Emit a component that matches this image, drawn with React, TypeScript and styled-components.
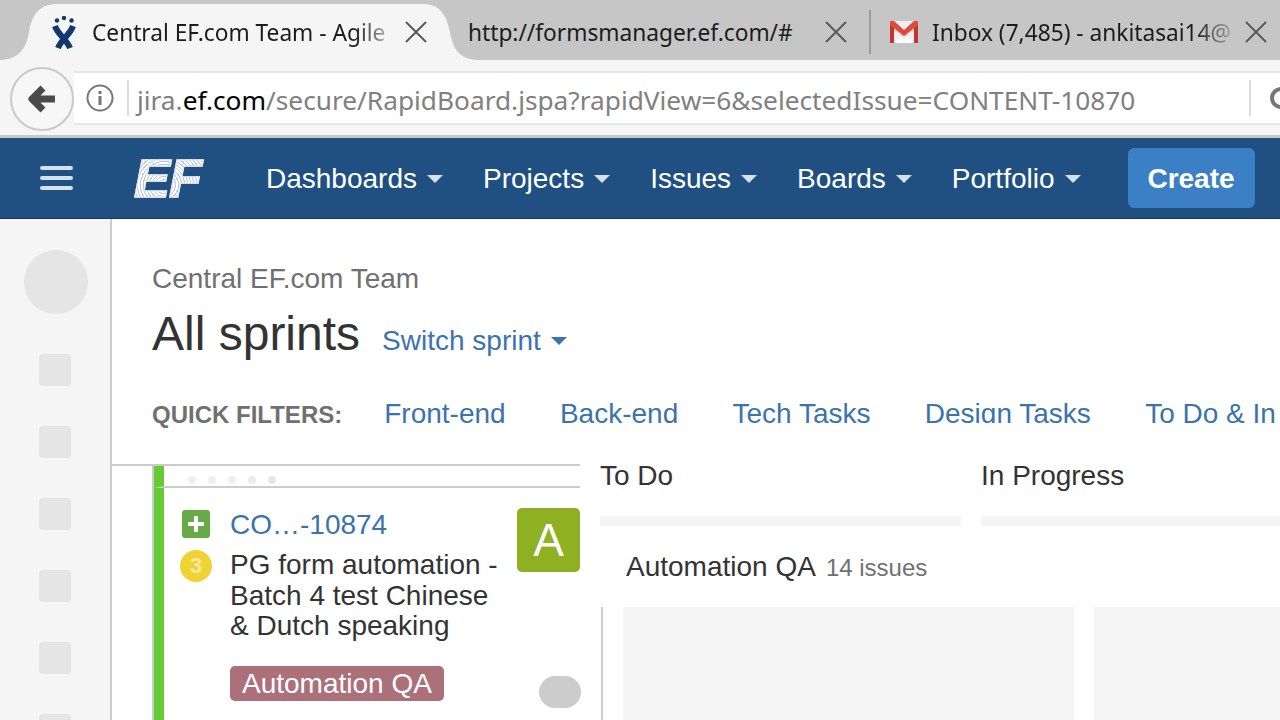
import styled, { createGlobalStyle } from "styled-components";

const GlobalStyle = createGlobalStyle`
  html, body {
    margin: 0;
    padding: 0;
    background: #fff;
  }
  #root {
    width: 1280px;
    height: 720px;
    overflow: hidden;
  }
`;

const Page = styled.div`
  width: 1280px;
  height: 720px;
  overflow: hidden;
  display: flex;
  flex-direction: column;
  font-family: "Liberation Sans", Arial, sans-serif;
  color: #333;
`;

const TabStrip = styled.div`
  height: 60px;
  flex: none;
  background: #c6c6c6;
  display: flex;
  align-items: stretch;
  font-family: "Noto Sans", sans-serif;
`;

const Tab = styled.div<{ $active?: boolean; $width: number; $pad: number }>`
  box-sizing: border-box;
  flex: none;
  width: ${(props) => props.$width}px;
  padding-left: ${(props) => props.$pad}px;
  padding-top: 4px;
  display: flex;
  align-items: center;
  gap: 14px;
  background: ${(props) => (props.$active ? "#f5f5f5" : "transparent")};
  clip-path: ${(props) =>
    props.$active
      ? `path("M0 60 C20 59 26 48 29 32 C32 14 40 4 58 4 L422 4 C440 4 446 14 450 32 C453 48 458 59 478 60 Z")`
      : "none"};
  margin-right: ${(props) => (props.$active ? "-20px" : "0")};
`;

const TabTitle = styled.div<{ $width: number; $fade?: boolean }>`
  flex: none;
  width: ${(props) => props.$width}px;
  padding-top: 2px;
  font-size: 22.7px;
  line-height: 32px;
  color: #1c1c1c;
  white-space: nowrap;
  overflow: hidden;
  mask-image: ${(props) =>
    props.$fade ? "linear-gradient(to right, #000 88%, rgba(0,0,0,0.25))" : "none"};
`;

const TabDivider = styled.div`
  flex: none;
  width: 2px;
  margin: 10px 0 6px;
  background: #9c9c9c;
`;

const CloseIcon = styled.svg`
  flex: none;
  width: 24px;
  height: 24px;
  stroke: #5a5a5a;
  stroke-width: 2;
  fill: none;
`;

const Toolbar = styled.div`
  height: 75px;
  flex: none;
  box-sizing: border-box;
  background: #f5f5f5;
  display: flex;
  align-items: center;
  padding-left: 10px;
`;

const BackButton = styled.div`
  flex: none;
  box-sizing: border-box;
  width: 64px;
  height: 64px;
  margin-top: 2px;
  border: 2px solid #c9c9c9;
  border-radius: 50%;
  background: #f7f7f7;
  display: flex;
  align-items: center;
  justify-content: center;
`;

const Omnibox = styled.div`
  flex: 1;
  min-width: 0;
  box-sizing: border-box;
  height: 54px;
  background: #fff;
  border-top: 2px solid #e6e6e6;
  border-bottom: 2px solid #e6e6e6;
  display: flex;
  align-items: center;
  padding-left: 12px;
  overflow: hidden;
`;

const OmniDivider = styled.div`
  flex: none;
  width: 2px;
  height: 36px;
  background: #dcdcdc;
`;

const UrlText = styled.div`
  flex: none;
  width: 1120px;
  box-sizing: border-box;
  padding: 4px 0 0 8px;
  font-family: "Noto Sans", sans-serif;
  font-size: 26.25px;
  line-height: 36px;
  color: #808080;
  white-space: nowrap;
  b {
    font-weight: 400;
    color: #000;
  }
`;

const NavBar = styled.nav`
  height: 84px;
  flex: none;
  box-sizing: border-box;
  background: #205081;
  border-top: 3px solid #c8c8c8;
  border-bottom: 1px solid #1d3557;
  display: flex;
  align-items: center;
  padding-left: 40px;
`;

const Burger = styled.div`
  flex: none;
  width: 33px;
  display: flex;
  flex-direction: column;
  gap: 6px;
  margin-right: 61px;
  span {
    display: block;
    height: 4px;
    border-radius: 2px;
    background: #d6e0ea;
  }
`;

const EfLogo = styled.div`
  flex: none;
  width: 72px;
  margin-right: 60px;
  font-weight: 700;
  font-style: italic;
  font-size: 54px;
  line-height: 54px;
  letter-spacing: -1px;
  color: transparent;
  background: repeating-radial-gradient(circle at 30px 34px, #ffffff 0 2px, #b9c7d8 2px 3px);
  -webkit-background-clip: text;
  background-clip: text;
  -webkit-text-stroke: 1.5px rgba(226, 232, 240, 0.85);
  filter: blur(0.4px);
`;

const NavItem = styled.div`
  flex: none;
  display: flex;
  align-items: center;
  gap: 10px;
  margin-right: 40px;
  padding-top: 2px;
  font-size: 28px;
  line-height: 40px;
  color: #fff;
  white-space: nowrap;
`;

const Caret = styled.span<{ $color?: string }>`
  flex: none;
  width: 0;
  height: 0;
  border-left: 8px solid transparent;
  border-right: 8px solid transparent;
  border-top: 8px solid ${(props) => props.$color || "#d6e0ea"};
`;

const CreateButton = styled.div`
  flex: none;
  box-sizing: border-box;
  width: 127px;
  height: 60px;
  margin-left: 7px;
  padding-top: 1px;
  border-radius: 6px;
  background: #3b7fc4;
  color: #fff;
  font-size: 28px;
  font-weight: 700;
  display: flex;
  align-items: center;
  justify-content: center;
`;

const Body = styled.div`
  flex: 1;
  min-height: 0;
  display: flex;
`;

const Sidebar = styled.aside`
  flex: none;
  width: 112px;
  box-sizing: border-box;
  background: #f5f5f5;
  border-right: 2px solid #ccc;
  display: flex;
  flex-direction: column;
  align-items: center;
  padding-top: 31px;
  gap: 40px;
  overflow: hidden;
`;

const SideAvatar = styled.div`
  flex: none;
  width: 64px;
  height: 64px;
  border-radius: 50%;
  background: #e5e5e5;
  margin-left: 2px;
`;

const SideSquare = styled.div`
  flex: none;
  width: 32px;
  height: 32px;
  border-radius: 4px;
  background: #e5e5e5;
`;

const Main = styled.main`
  flex: 1;
  min-width: 0;
  display: flex;
  flex-direction: column;
  overflow: hidden;
`;

const Header = styled.header`
  flex: none;
  height: 245px;
  box-sizing: border-box;
  padding: 40px 0 0 40px;
`;

const Crumb = styled.div`
  font-size: 28px;
  line-height: 40px;
  color: #707070;
`;

const TitleRow = styled.div`
  display: flex;
  align-items: baseline;
  gap: 22px;
  margin-top: 7px;
  height: 56px;
`;

const Title = styled.h1`
  margin: 0;
  font-size: 48px;
  line-height: 56px;
  font-weight: 400;
  color: #333;
`;

const SwitchSprint = styled.div`
  display: flex;
  align-items: center;
  gap: 10px;
  font-size: 28px;
  color: #3b73af;
`;

const Filters = styled.div`
  display: flex;
  align-items: flex-start;
  height: 29px;
  margin-top: 32px;
  white-space: nowrap;
`;

const FilterLabel = styled.div`
  flex: none;
  font-size: 24px;
  line-height: 42px;
  font-weight: 700;
  color: #707070;
  margin-right: 42px;
`;

const FilterLink = styled.div`
  flex: none;
  height: 29px;
  overflow: hidden;
  font-size: 28px;
  line-height: 40px;
  color: #3b73af;
  margin-right: 54.3px;
`;

const Board = styled.div`
  flex: 1;
  min-height: 0;
  display: flex;
`;

const DetailPanel = styled.section`
  flex: none;
  width: 468px;
  box-sizing: border-box;
  border-top: 2px solid #ccc;
  padding-left: 40px;
`;

const CardStrip = styled.div`
  height: 100%;
  border-left: 2px solid #ccc;
  display: flex;
  flex-direction: column;
`;

const Handle = styled.div`
  flex: none;
  height: 22px;
  box-sizing: border-box;
  border-left: 10px solid #65cc33;
  border-bottom: 2px solid #ccc;
  padding: 10px 0 0 24px;
  display: flex;
  gap: 12px;
`;

const HandleDot = styled.span<{ $shade: string }>`
  width: 8px;
  height: 8px;
  border-radius: 50%;
  background: ${(props) => props.$shade};
`;

const Card = styled.article`
  flex: 1;
  border-left: 10px solid #65cc33;
  padding: 20px 0 0 18px;
  display: grid;
  grid-template-columns: 48px 287px 63px;
  grid-template-rows: 30px auto;
  align-content: start;
`;

const TypeIcon = styled.div`
  width: 28px;
  height: 28px;
  margin-top: 2px;
  border-radius: 3px;
  background: #67ab49;
  display: flex;
  align-items: center;
  justify-content: center;
`;

const IssueKey = styled.div`
  font-size: 28px;
  line-height: 32px;
  padding-top: 1px;
  color: #3b73af;
`;

const Assignee = styled.div`
  grid-row: 1 / span 2;
  grid-column: 3;
  width: 63px;
  height: 64px;
  border-radius: 5px;
  background: #8eb021;
  color: #fff;
  font-size: 46px;
  display: flex;
  align-items: center;
  justify-content: center;
`;

const Priority = styled.div`
  width: 32px;
  height: 32px;
  margin: 12px 0 0 -2px;
  border-radius: 50%;
  background: #f0d332;
  color: #f8eaa0;
  font-size: 22px;
  font-weight: 700;
  display: flex;
  align-items: center;
  justify-content: center;
`;

const CardBody = styled.div`
  padding-top: 12px;
`;

const Summary = styled.div`
  font-size: 28px;
  line-height: 30.5px;
  color: #333;
  width: 280px;
`;

const LabelRow = styled.div`
  display: flex;
  align-items: flex-start;
  margin-top: 24px;
`;

const Label = styled.div`
  flex: none;
  box-sizing: border-box;
  height: 35px;
  padding: 0 12px;
  border-radius: 5px;
  background: #ac707a;
  color: #fff;
  font-size: 28px;
  line-height: 35px;
`;

const GreyPill = styled.div`
  grid-column: 3;
  grid-row: 2;
  align-self: start;
  margin: 138px 0 0 22px;
  width: 42px;
  height: 32px;
  border-radius: 16px;
  background: #ccc;
`;

const Columns = styled.section`
  flex: 1;
  min-width: 0;
  padding-left: 20px;
  display: flex;
  flex-direction: column;
`;

const ColumnHeads = styled.div`
  flex: none;
  display: flex;
  gap: 20px;
`;

const ColumnHead = styled.div<{ $width: number }>`
  flex: none;
  width: ${(props) => props.$width}px;
  height: 62px;
  box-sizing: border-box;
  border-bottom: 10px solid #f5f5f5;
  font-size: 28px;
  line-height: 24px;
  color: #333;
  white-space: nowrap;
`;

const SwimHead = styled.div`
  flex: none;
  display: flex;
  align-items: baseline;
  gap: 10px;
  height: 81px;
  box-sizing: border-box;
  padding: 24px 0 0 26px;
  font-size: 28px;
  line-height: 34px;
`;

const SwimCount = styled.span`
  font-size: 24px;
  color: #707070;
`;

const Swimlane = styled.div`
  flex: 1;
  min-height: 0;
  margin-left: 1px;
  border-left: 2px solid #ccc;
  padding-left: 20px;
  display: flex;
  gap: 20px;
`;

const SwimColumn = styled.div<{ $width: number }>`
  flex: none;
  width: ${(props) => props.$width}px;
  background: #f5f5f5;
`;

const Close = () => (
  <CloseIcon viewBox="0 0 24 24">
    <path d="M2 2 L22 22 M22 2 L2 22" />
  </CloseIcon>
);

const AtlassianMark = () => (
  <svg width="24" height="33" viewBox="0 0 24 33" style={{ flex: "none", marginLeft: 2, marginRight: 2 }}>
    <g fill="#0f3a6b">
      <circle cx="5" cy="4.5" r="2.2" />
      <circle cx="12" cy="2" r="2.2" />
      <circle cx="19.5" cy="4.5" r="2.2" />
    </g>
    <g fill="none" stroke="#0f3a6b" strokeWidth="6">
      <path d="M3 10 C6 19 14 22 18 32" />
      <path d="M21 10 C18 19 10 22 6 32" />
    </g>
  </svg>
);

const GmailMark = () => (
  <svg width="28" height="22" viewBox="0 0 28 22" style={{ flex: "none" }}>
    <rect x="1" y="0" width="26" height="22" rx="1" fill="#f0f0f0" />
    <path d="M4 22 L14 13 L24 22 Z" fill="#fafafa" />
    <path d="M4 6 L14 15 L24 6 V9 L14 17 L4 9 Z" fill="#d9d9d9" />
    <path d="M0 22 V2 C0 0.5 1 0 2 0 H4 V22 Z M24 22 V0 H26 C27 0 28 0.5 28 2 V22 Z" fill="#c5352b" />
    <path d="M0 2 C0 0.5 1 0 2 0 H4 L14 9 L24 0 H26 C27 0 28 0.5 28 2 V4 L14 15 L0 4 Z" fill="#e04a3a" />
  </svg>
);

const navItems = ["Dashboards", "Projects", "Issues", "Boards", "Portfolio"];
const filters = ["Front-end", "Back-end", "Tech Tasks", "Design Tasks", "To Do & In Progress"];
const dotShades = ["#f0f0f0", "#f0f0f0", "#eeeeee", "#ececec", "#e6e6e6"];

export default function App() {
  return (
    <>
      <GlobalStyle />
      <Page>
        <TabStrip>
          <Tab $active $width={478} $pad={50}>
            <AtlassianMark />
            <TabTitle $width={298} $fade>
              Central EF.com Team - Agile
            </TabTitle>
            <Close />
          </Tab>
          <Tab $width={411} $pad={10}>
            <TabTitle $width={342}>http://formsmanager.ef.com/#</TabTitle>
            <Close />
          </Tab>
          <TabDivider />
          <Tab $width={409} $pad={19}>
            <GmailMark />
            <TabTitle $width={298} $fade>
              Inbox (7,485) - ankitasai14@
            </TabTitle>
            <Close />
          </Tab>
        </TabStrip>

        <Toolbar>
          <BackButton>
            <svg width="30" height="30" viewBox="0 0 30 30">
              <path
                d="M28 15 H6 M16 4 L5 15 L16 26"
                fill="none"
                stroke="#4a4a4a"
                strokeWidth="7"
                strokeLinejoin="round"
              />
            </svg>
          </BackButton>
          <Omnibox>
            <svg width="28" height="28" viewBox="0 0 28 28" style={{ flex: "none", marginRight: 13 }}>
              <circle cx="14" cy="14" r="12.5" fill="none" stroke="#777" strokeWidth="2" />
              <rect x="12.5" y="12" width="3" height="9" fill="#777" />
              <rect x="12.5" y="7" width="3" height="3" fill="#777" />
            </svg>
            <OmniDivider />
            <UrlText>
              jira.<b>ef.com</b>/secure/RapidBoard.jspa?rapidView=6&amp;selectedIssue=CONTENT-10870
            </UrlText>
            <OmniDivider />
            <svg width="30" height="30" viewBox="0 0 30 30" style={{ flex: "none", marginLeft: 19 }}>
              <circle cx="11" cy="15" r="9" fill="none" stroke="#777" strokeWidth="4" />
            </svg>
          </Omnibox>
        </Toolbar>

        <NavBar>
          <Burger>
            <span />
            <span />
            <span />
          </Burger>
          <EfLogo>EF</EfLogo>
          {navItems.map((name) => (
            <NavItem key={name}>
              {name}
              <Caret />
            </NavItem>
          ))}
          <CreateButton>Create</CreateButton>
        </NavBar>

        <Body>
          <Sidebar>
            <SideAvatar />
            {[0, 1, 2, 3, 4, 5].map((i) => (
              <SideSquare key={i} />
            ))}
          </Sidebar>
          <Main>
            <Header>
              <Crumb>Central EF.com Team</Crumb>
              <TitleRow>
                <Title>All sprints</Title>
                <SwitchSprint>
                  Switch sprint
                  <Caret $color="#3b73af" />
                </SwitchSprint>
              </TitleRow>
              <Filters>
                <FilterLabel>QUICK FILTERS:</FilterLabel>
                {filters.map((name) => (
                  <FilterLink key={name}>{name}</FilterLink>
                ))}
              </Filters>
            </Header>
            <Board>
              <DetailPanel>
                <CardStrip>
                  <Handle>
                    {dotShades.map((shade, i) => (
                      <HandleDot key={i} $shade={shade} />
                    ))}
                  </Handle>
                  <Card>
                    <TypeIcon>
                      <svg width="16" height="16" viewBox="0 0 16 16">
                        <path d="M8 1.5 V14.5 M1.5 8 H14.5" stroke="#fff" strokeWidth="4" strokeLinecap="round" />
                      </svg>
                    </TypeIcon>
                    <IssueKey>CO…-10874</IssueKey>
                    <Assignee>A</Assignee>
                    <Priority>3</Priority>
                    <CardBody>
                      <Summary>PG form automation - Batch 4 test Chinese &amp; Dutch speaking</Summary>
                      <LabelRow>
                        <Label>Automation QA</Label>
                      </LabelRow>
                    </CardBody>
                    <GreyPill />
                  </Card>
                </CardStrip>
              </DetailPanel>
              <Columns>
                <ColumnHeads>
                  <ColumnHead $width={361}>To Do</ColumnHead>
                  <ColumnHead $width={320}>In Progress</ColumnHead>
                </ColumnHeads>
                <SwimHead>
                  Automation QA
                  <SwimCount>14 issues</SwimCount>
                </SwimHead>
                <Swimlane>
                  <SwimColumn $width={451} />
                  <SwimColumn $width={320} />
                </Swimlane>
              </Columns>
            </Board>
          </Main>
        </Body>
      </Page>
    </>
  );
}
